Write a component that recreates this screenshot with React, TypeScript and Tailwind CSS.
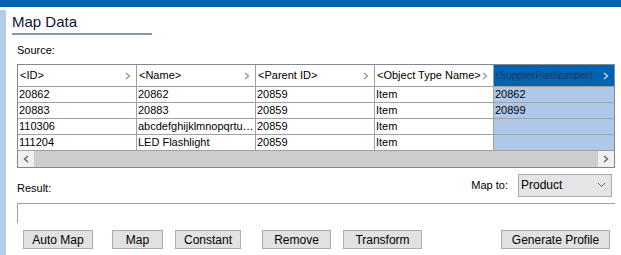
import React from "react";

const cols = ["<ID>", "<Name>", "<Parent ID>", "<Object Type Name>"];
const rows = [
  ["20862", "20862", "20859", "Item", "20862"],
  ["20883", "20883", "20859", "Item", "20899"],
  ["110306", "abcdefghijklmnopqrtu…", "20859", "Item", ""],
  ["111204", "LED Flashlight", "20859", "Item", ""],
];

function Chevron({ className }: { className?: string }) {
  return (
    <svg width="6" height="8" viewBox="0 0 6 8" className={className}>
      <path d="M1 1 L4.5 4 L1 7" fill="none" stroke="currentColor" strokeWidth="1.4" />
    </svg>
  );
}

function Btn({ label, w }: { label: string; w: string }) {
  return (
    <div className={`${w} h-[19px] bg-[#e1e1e1] border border-[#adadad] flex items-center justify-center text-[12px] text-black`}>
      {label}
    </div>
  );
}

export default function App() {
  return (
    <div
      className="w-[621px] h-[255px] bg-white relative overflow-hidden text-black"
      style={{ fontFamily: "Tahoma, 'Liberation Sans', Arial, sans-serif" }}
    >
      <div className="h-[7px] bg-[#0063b1]" />
      <div className="flex h-[248px]">
        <div className="w-[6px] mt-[3px] bg-[#b4cbea]" />
        <div className="flex-1 flex flex-col">
          <div className="pl-[6px] pt-[6px]">
            <div className="text-[15px] leading-[18px] text-[#111133]">Map Data</div>
            <div className="w-[140px] h-[2px] bg-[#8796a8] mt-[2px]" />
          </div>
          <div className="pl-[11px] mt-[9px] text-[11px] leading-[13px]">Source:</div>
          <div className="ml-[11px] mt-[7px] w-[598px] border border-[#828790] flex flex-col">
            {/* header */}
            <div className="flex h-[22px] border-b border-[#a0a0a0]">
              {cols.map((c) => (
                <div key={c} className="w-[119px] border-r border-[#a0a0a0] flex items-center justify-between pl-[2px] pr-[5px] text-[11px]">
                  <span>{c}</span>
                  <Chevron className="text-[#9a9a9a]" />
                </div>
              ))}
              <div className="flex-1 bg-[#0063b1] flex items-center justify-between pl-[2px] pr-[5px] text-[10.5px] tracking-[-0.3px] text-[#1b3a6a]">
                <span>(SupplierPartNumber)</span>
                <Chevron className="text-[#c8d0dc]" />
              </div>
            </div>
            {rows.map((r, i) => (
              <div key={i} className="flex h-[16px] border-b border-[#a0a0a0]">
                {r.slice(0, 4).map((v, j) => (
                  <div key={j} className="w-[119px] border-r border-[#a0a0a0] pl-[1px] text-[11px] leading-[15px] whitespace-nowrap overflow-hidden">
                    {v}
                  </div>
                ))}
                <div className="flex-1 bg-[#b0c8e8] pl-[1px] text-[11px] leading-[15px]">{r[4]}</div>
              </div>
            ))}
            {/* scrollbar */}
            <div className="h-[16px] bg-[#f0f0f0] flex items-center">
              <div className="w-[16px] flex items-center justify-center text-[#606060]">
                <Chevron className="rotate-180" />
              </div>
              <div className="flex-1 h-[16px] bg-[#cdcdcd]" />
              <div className="w-[16px] flex items-center justify-center text-[#606060]">
                <Chevron />
              </div>
            </div>
          </div>
          <div className="flex items-center mt-[5px] h-[24px]">
            <div className="pl-[11px] text-[11px] mt-[6px]">Result:</div>
            <div className="flex-1" />
            <div className="text-[11px] mr-[10px]">Map to:</div>
            <div className="w-[94px] h-[23px] bg-[#e5e5e5] border border-[#acacac] flex items-center justify-between pl-[2px] pr-[5px] mr-[9px] text-[12px]">
              <span>Product</span>
              <svg width="9" height="6" viewBox="0 0 9 6">
                <path d="M1 1 L4.5 4.5 L8 1" fill="none" stroke="#606060" strokeWidth="1" />
              </svg>
            </div>
          </div>
          <div className="ml-[11px] mt-[6px] w-[598px] h-[20px] border-t border-l border-[#a0a0a0]" />
          <div className="flex items-center mt-[7px] pl-[17px]">
            <Btn label="Auto Map" w="w-[70px]" />
            <div className="w-[19px]" />
            <Btn label="Map" w="w-[51px]" />
            <div className="w-[12px]" />
            <Btn label="Constant" w="w-[66px]" />
            <div className="w-[21px]" />
            <Btn label="Remove" w="w-[69px]" />
            <div className="w-[12px]" />
            <Btn label="Transform" w="w-[79px]" />
            <div className="w-[79px]" />
            <Btn label="Generate Profile" w="w-[109px]" />
          </div>
        </div>
      </div>
    </div>
  );
}
